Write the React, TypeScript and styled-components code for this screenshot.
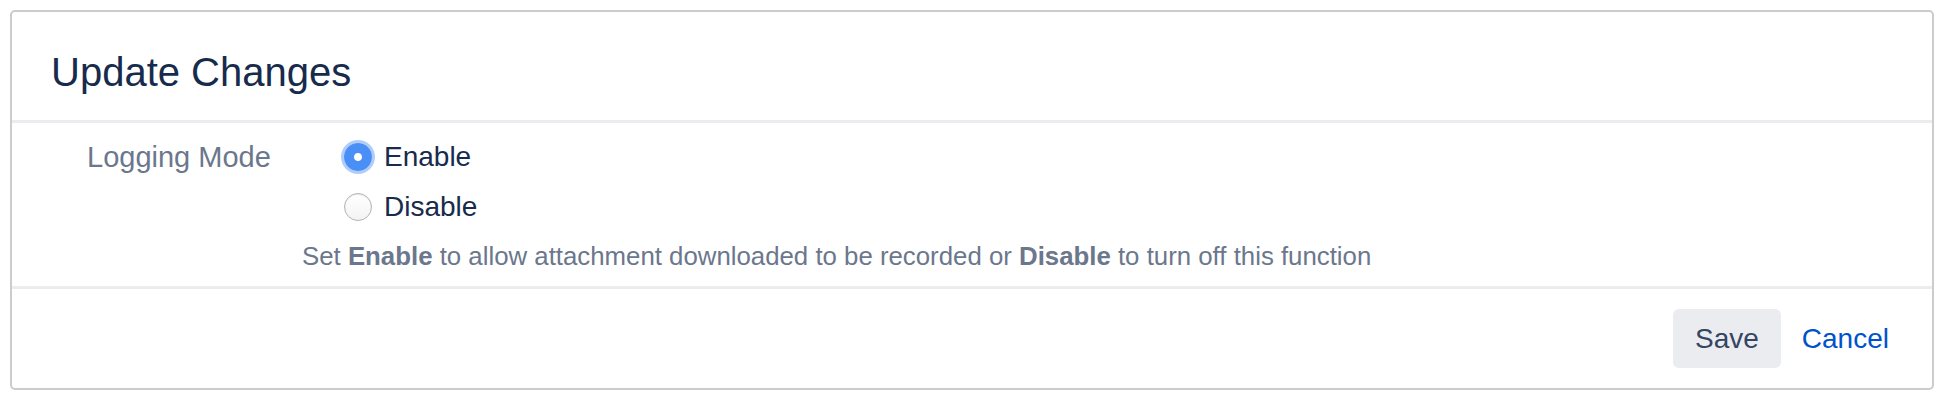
import React, { useState } from 'react';
import styled, { createGlobalStyle } from 'styled-components';

const GlobalStyle = createGlobalStyle`
  body {
    margin: 0;
    background: #ffffff;
    font-family: "Liberation Sans", Arial, sans-serif;
  }
`;

const Page = styled.div`
  padding: 10px;
`;

const Dialog = styled.section`
  border: 2px solid #cccccc;
  border-radius: 5px;
  background: #ffffff;
`;

const Header = styled.header`
  padding: 36px 39px 24px;
  border-bottom: 3px solid #ebecf0;
`;

const Title = styled.h2`
  margin: 0;
  font-size: 40px;
  line-height: 48px;
  font-weight: 400;
  color: #172b4d;
`;

const Body = styled.div`
  display: flex;
  padding: 16px 0 15px;
`;

const FieldLabel = styled.label`
  width: 215px;
  padding-left: 75px;
  font-size: 29px;
  line-height: 36px;
  color: #6b778c;
`;

const Field = styled.div`
  display: flex;
  flex-direction: column;
`;

const Options = styled.div`
  display: flex;
  flex-direction: column;
  gap: 14px;
  padding-left: 42px;
`;

const Option = styled.label`
  display: flex;
  align-items: center;
  gap: 12px;
  font-size: 28px;
  line-height: 36px;
  color: #172b4d;
  cursor: pointer;
`;

const Radio = styled.input`
  appearance: none;
  margin: 0;
  width: 28px;
  height: 28px;
  border-radius: 50%;
  border: 1px solid #b3b3b3;
  background: linear-gradient(#ffffff, #f3f3f3);
  box-shadow: inset 0 1px 1px rgba(0, 0, 0, 0.08);

  &:checked {
    border: none;
    background: radial-gradient(circle, #ffffff 0 3.5px, #4a8ff5 4.5px);
    box-shadow: 0 0 0 3px #b0cdfa;
  }
`;

const Description = styled.p`
  margin: 16px 0 0;
  font-size: 25.8px;
  line-height: 30px;
  color: #6b778c;

  b {
    font-weight: 700;
  }
`;

const Footer = styled.footer`
  display: flex;
  justify-content: flex-end;
  align-items: center;
  height: 99px;
  padding-right: 22px;
  border-top: 3px solid #ebecf0;
`;

const Button = styled.button<{ $link?: boolean }>`
  height: 59px;
  padding: 0 ${({ $link }) => ($link ? '21px' : '22px')};
  border: none;
  border-radius: 6px;
  background: ${({ $link }) => ($link ? 'transparent' : '#ebecf0')};
  color: ${({ $link }) => ($link ? '#0052cc' : '#344563')};
  font-family: inherit;
  font-size: 28px;
  cursor: pointer;
`;

export default function App() {
  const [mode, setMode] = useState('enable');

  return (
    <Page>
      <GlobalStyle />
      <Dialog>
        <Header>
          <Title>Update Changes</Title>
        </Header>
        <Body>
          <FieldLabel>Logging Mode</FieldLabel>
          <Field>
            <Options>
              <Option>
                <Radio
                  type="radio"
                  name="logging"
                  checked={mode === 'enable'}
                  onChange={() => setMode('enable')}
                />
                Enable
              </Option>
              <Option>
                <Radio
                  type="radio"
                  name="logging"
                  checked={mode === 'disable'}
                  onChange={() => setMode('disable')}
                />
                Disable
              </Option>
            </Options>
            <Description>
              Set <b>Enable</b> to allow attachment downloaded to be recorded or <b>Disable</b> to turn off this function
            </Description>
          </Field>
        </Body>
        <Footer>
          <Button>Save</Button>
          <Button $link>Cancel</Button>
        </Footer>
      </Dialog>
    </Page>
  );
}
